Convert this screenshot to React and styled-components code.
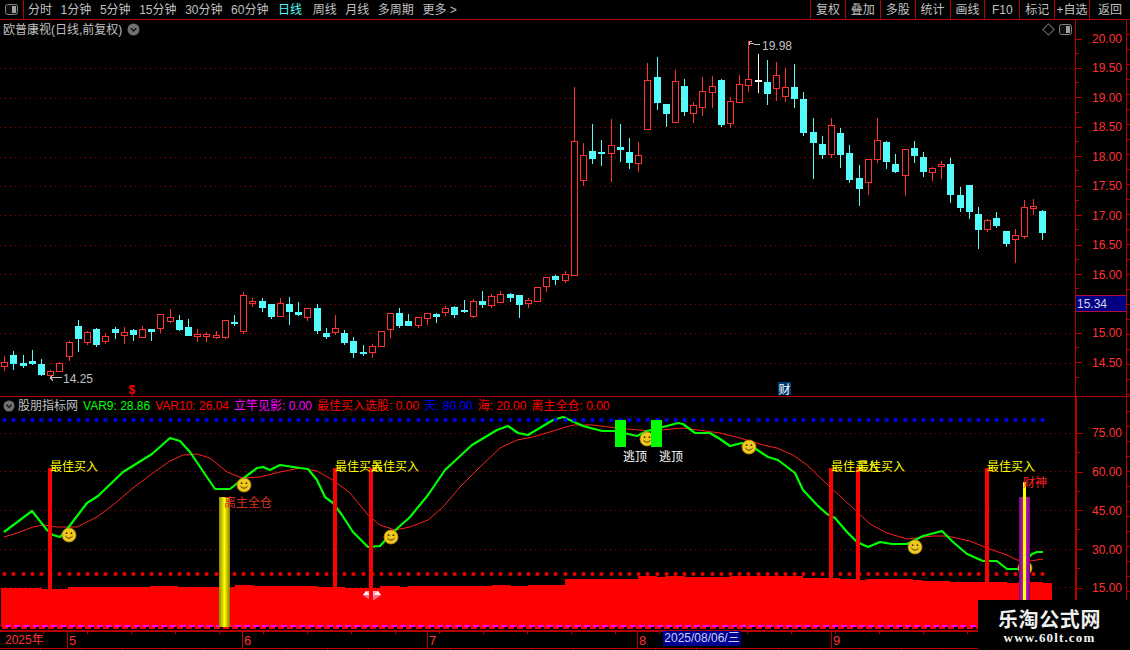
import React from 'react';
import styled, { createGlobalStyle } from 'styled-components';

const RED_LINE = '#b80000';
const AXIS_RED = '#ff3232';
const CYAN = '#54fcfc';
const CJK = '"Liberation Sans", "Noto Sans CJK SC", sans-serif';

const GlobalStyle = createGlobalStyle`
  html, body { margin: 0; padding: 0; background: #000; }
  #root { width: 1130px; height: 650px; }
`;

const Page = styled.div`
  position: relative;
  width: 1130px;
  height: 650px;
  overflow: hidden;
  background: #000;
  display: flex;
  flex-direction: column;
  font: 12px/1 ${CJK};
  color: #c0c0c0;
`;

const Toolbar = styled.header`
  flex: 0 0 20px;
  display: flex;
  align-items: stretch;
  border-bottom: 1px solid ${RED_LINE};
  box-sizing: border-box;
`;

const ToolIcon = styled.div`
  width: 23px;
  display: flex;
  align-items: center;
  justify-content: center;
  border-right: 1px solid ${RED_LINE};
`;

const PeriodList = styled.nav`
  display: flex;
  align-items: center;
  gap: 8.6px;
  padding-left: 4px;
`;

const Period = styled.span`
  color: ${(p) => (p.$active ? '#54fcfc' : '#c0c0c0')};
  margin-left: ${(p) => p.$nudge || 0}px;
  white-space: nowrap;
`;

const ActionList = styled.nav`
  margin-left: auto;
  display: flex;
`;

const Action = styled.span`
  width: ${(p) => (p.$wide ? '41px' : '34.875px')};
  box-sizing: border-box;
  border-left: 1px solid ${RED_LINE};
  display: flex;
  align-items: center;
  justify-content: center;
  white-space: nowrap;
`;

const Pane = styled.section`
  flex: 0 0 ${(p) => p.$height}px;
  display: flex;
  box-sizing: border-box;
  border-bottom: ${(p) => (p.$divided ? `1px solid ${RED_LINE}` : '0')};
`;

const ChartColumn = styled.div`
  position: relative;
  width: 1075px;
  display: flex;
  flex-direction: column;
`;

const ChartSvg = styled.svg`
  display: block;
  flex: 1 1 auto;
  shape-rendering: crispEdges;
`;

const PaneTitle = styled.div`
  position: absolute;
  left: 3px;
  top: 3px;
  display: flex;
  align-items: center;
  gap: 5px;
  height: 13px;
  white-space: nowrap;
`;

const PaneTools = styled.div`
  position: absolute;
  right: 3px;
  top: 4px;
  display: flex;
  align-items: center;
  gap: 6px;
`;

const Diamond = styled.i`
  display: block;
  width: 7px;
  height: 7px;
  border: 1px solid #707070;
  transform: rotate(45deg);
`;

const Legend = styled.div`
  flex: 0 0 18px;
  display: flex;
  align-items: center;
  gap: 5px;
  padding-left: 3px;
  white-space: nowrap;
`;

const LegendItem = styled.span`
  color: ${(p) => p.$color};
`;

const LegendName = styled.span`
  color: #c0c0c0;
  margin-left: -2px;
`;

const Axis = styled.aside`
  width: 52px;
  box-sizing: border-box;
  border-left: ${(p) => p.$border}px solid ${RED_LINE};
  border-right: 1px solid ${RED_LINE};
  padding-top: ${(p) => p.$top}px;
  display: flex;
  flex-direction: column;
`;

const AxisRow = styled.div`
  flex: 0 0 ${(p) => p.$height}px;
  display: flex;
  align-items: center;
  justify-content: flex-end;
  padding-right: 4px;
  color: ${AXIS_RED};
  background:
    linear-gradient(${RED_LINE}, ${RED_LINE}) left center / 6px 1px no-repeat,
    linear-gradient(${RED_LINE}, ${RED_LINE}) left bottom / 3px 1px no-repeat;
`;

const CurrentPrice = styled.div`
  flex: 0 0 29.45px;
  display: flex;
  align-items: center;
`;

const CurrentValue = styled.span`
  flex: 1;
  height: 17px;
  line-height: 16px;
  box-sizing: border-box;
  padding-left: 1px;
  background: #000080;
  border-top: 1px solid #b01040;
  border-bottom: 1px solid #b01040;
  color: #d0d8f0;
`;

const EdgeStrip = styled.div`
  flex: 1 1 auto;
  background: repeating-linear-gradient(
    to bottom,
    #000 0,
    #000 14px,
    ${RED_LINE} 14px,
    ${RED_LINE} 15px
  );
`;

const DateAxis = styled.div`
  flex: 0 0 19px;
  box-sizing: border-box;
  display: flex;
  border-top: 2px solid ${RED_LINE};
  border-bottom: 1px solid ${RED_LINE};
  color: ${AXIS_RED};
  align-items: stretch;
  background: repeating-linear-gradient(
      to right,
      transparent 0,
      transparent 43px,
      ${RED_LINE} 43px,
      ${RED_LINE} 44px
    )
    left top / 100% 2px no-repeat;
`;

const DateCell = styled.span`
  flex: 0 0 ${(p) => p.$width}px;
  box-sizing: border-box;
  display: flex;
  align-items: center;
  padding-left: ${(p) => (p.$first ? 5 : 1)}px;
  border-left: ${(p) => (p.$first ? '0' : `1px solid ${RED_LINE}`)};
  font-size: ${(p) => (p.$first ? 12 : 13)}px;
`;

const DateFlag = styled.span`
  position: absolute;
  left: 663px;
  top: 631px;
  width: 78px;
  height: 15px;
  background: #000090;
  color: #c8d0f8;
  line-height: 15px;
  text-align: center;
  white-space: nowrap;
`;

const TabStrip = styled.div`
  flex: 1 1 auto;
  background: repeating-linear-gradient(
    to right,
    #000 0,
    #000 40px,
    ${RED_LINE} 40px,
    ${RED_LINE} 41px
  );
`;

const Watermark = styled.div`
  position: absolute;
  left: 978px;
  top: 600px;
  width: 152px;
  height: 50px;
  background: #000;
  display: flex;
  flex-direction: column;
  align-items: center;
  padding-right: 9px;
  box-sizing: border-box;
`;

const WatermarkName = styled.strong`
  margin-top: 8px;
  font: 700 20px/22px "Noto Sans CJK SC", sans-serif;
  letter-spacing: 0.6px;
  color: #f0f0f0;
`;

const WatermarkUrl = styled.em`
  font: 700 13px/15px "Liberation Serif", serif;
  font-style: normal;
  letter-spacing: 1.15px;
  color: #f4f4f4;
`;

const ChartText = styled.text`
  font: ${(p) => p.$size || 12}px ${CJK};
  font-weight: ${(p) => (p.$bold ? 700 : 400)};
  fill: ${(p) => p.$color || '#c0c0c0'};
  shape-rendering: auto;
  white-space: pre;
`;

const CurveLine = styled.polyline`
  fill: none;
  stroke: ${(p) => p.$color};
  stroke-width: ${(p) => p.$weight}px;
  stroke-linejoin: round;
  shape-rendering: auto;
`;

const GridLine = styled.line`
  stroke: #a00000;
  stroke-width: 1px;
  stroke-dasharray: 1 4;
`;

const PanelGlyph = () => (
  <svg width="13" height="11" viewBox="0 0 13 11">
    <rect x="0.5" y="0.5" width="12" height="10" rx="2" fill="#101010" stroke="#808080" />
    <rect x="7" y="2" width="4" height="7" fill="#a0a0a0" />
  </svg>
);

const ChevronBadge = ({ size = 13 }) => (
  <svg width={size} height={size} viewBox="0 0 13 13">
    <circle cx="6.5" cy="6.5" r="6" fill="#707070" />
    <path d="M3.8 5.2 L6.5 8 L9.2 5.2" fill="none" stroke="#101010" strokeWidth="1.4" />
  </svg>
);

// high, body top, body bottom, low, kind
const CANDLES = [
  [356,362,366,370,'r'],[351,355,363,369,'c'],[355,363,365,367,'c'],[350,361,363,364,'c'],[359,364,374,375,'c'],
  [370,371,375,376,'r'],[362,363,371,371,'r'],[341,342,356,360,'r'],[320,326,338,351,'c'],[331,332,342,344,'r'],
  [328,329,344,346,'c'],[333,336,341,343,'r'],[327,329,332,338,'c'],[327,332,335,343,'r'],[329,330,334,340,'c'],
  [326,329,337,337,'r'],[329,329,331,340,'c'],[314,314,328,332,'r'],[309,317,321,322,'r'],[315,320,329,330,'c'],
  [319,327,335,335,'c'],[329,334,336,341,'r'],[332,334,336,341,'r'],[331,335,337,338,'r'],[320,320,337,338,'r'],
  [315,322,323,325,'c'],[292,295,331,333,'r'],[298,301,303,306,'r'],[298,301,307,311,'c'],[304,304,316,318,'c'],
  [298,303,316,316,'r'],[297,304,311,324,'c'],[302,312,314,315,'c'],[308,308,317,320,'r'],[304,308,330,333,'c'],
  [328,333,336,338,'c'],[315,328,332,334,'r'],[330,333,342,344,'c'],[337,341,352,357,'c'],[345,352,353,355,'c'],
  [344,346,352,357,'r'],[331,331,346,346,'r'],[313,313,329,337,'r'],[308,313,325,327,'c'],[314,321,325,325,'c'],
  [317,317,325,327,'r'],[313,313,318,324,'r'],[313,314,316,322,'c'],[306,308,312,315,'r'],[306,307,314,317,'c'],
  [300,310,311,312,'c'],[299,301,316,317,'r'],[291,301,304,307,'c'],[294,296,305,307,'r'],[291,294,302,302,'r'],
  [293,294,297,301,'c'],[295,295,304,317,'c'],[298,300,303,307,'r'],[287,287,301,301,'r'],[277,277,286,291,'r'],
  [275,276,279,284,'c'],[271,274,280,282,'r'],[87,141,275,275,'r'],[143,155,180,185,'r'],[124,151,158,163,'c'],
  [140,152,153,165,'c'],[119,145,153,181,'r'],[124,147,149,161,'c'],[138,152,162,168,'c'],[142,155,163,171,'r'],
  [63,80,129,129,'r'],[57,77,102,109,'c'],[104,104,113,126,'c'],[70,81,122,122,'r'],[79,86,111,115,'c'],
  [102,105,113,122,'r'],[77,91,107,115,'r'],[76,86,92,107,'r'],[79,80,124,126,'c'],[97,101,123,127,'r'],
  [75,84,102,102,'r'],[41,79,85,91,'r'],[54,80,81,92,'w'],[60,82,93,104,'c'],[62,75,88,100,'r'],
  [68,87,96,101,'r'],[64,87,98,107,'c'],[92,99,132,135,'c'],[118,132,142,178,'c'],[136,144,154,158,'c'],
  [118,125,154,157,'r'],[128,133,154,167,'c'],[145,153,179,182,'c'],[165,178,188,205,'c'],[159,159,182,194,'r'],
  [118,140,159,162,'r'],[141,142,161,168,'c'],[154,164,171,172,'c'],[149,149,175,195,'r'],[141,148,155,162,'c'],
  [152,157,171,176,'c'],[167,168,172,180,'r'],[161,164,166,178,'r'],[158,164,194,202,'c'],[187,195,207,211,'c'],
  [185,185,211,218,'c'],[207,214,229,248,'c'],[219,220,229,231,'r'],[212,218,225,227,'c'],[231,231,243,246,'c'],
  [229,235,239,262,'r'],[200,207,236,238,'r'],[199,206,208,214,'r'],[210,211,232,239,'c'],
];

const slotX = (i) => Math.round(4.3 + 9.186 * i);
const KIND_COLOR = { r: AXIS_RED, c: CYAN, w: '#ffffff' };

const Candle = ({ x, data }) => {
  const [high, top, bottom, low, kind] = data;
  const color = KIND_COLOR[kind];
  const height = Math.max(bottom - top, 1);
  return (
    <g>
      <rect x={x} y={high} width="1" height={low - high + 1} fill={color} />
      {kind === 'r' && bottom - top > 1 ? (
        <rect x={x - 2.5} y={top + 0.5} width="6" height={height} fill="#000" stroke={color} strokeWidth="1" />
      ) : (
        <rect x={x - 3} y={top} width="7" height={height + 1} fill={color} />
      )}
    </g>
  );
};

const PRICE_GRID = [68, 98, 127, 157, 186, 215, 245, 274, 304, 333, 363];

const PriceChart = () => (
  <ChartSvg width="1075" height="376" viewBox="0 20 1075 376">
    {PRICE_GRID.map((y) => (
      <GridLine key={y} x1="0" x2="1075" y1={y + 0.5} y2={y + 0.5} />
    ))}
    {CANDLES.map((c, i) => (
      <Candle key={i} x={slotX(i)} data={c} />
    ))}
    <path d="M50 377.5H62M50 377.5l3-2M50 377.5l3 3" stroke="#c0c0c0" fill="none" />
    <ChartText x="63" y="383">14.25</ChartText>
    <path d="M749.5 45V41.5H752M749.5 43.5H754M754 44.5H760" stroke="#c0c0c0" fill="none" />
    <ChartText x="762" y="50">19.98</ChartText>
    <ChartText x="128.5" y="393.5" $bold $color="#ff0000" $size={12}>$</ChartText>
    <rect x="778" y="382" width="13" height="13" fill="#003a70" />
    <ChartText x="778.5" y="393.5" $color="#ffffff">财</ChartText>
  </ChartSvg>
);

const GREEN = [
  [4,532],[32,511],[47,530],[53,535],[60,537],[68,528],[87,503],[98,496],[123,472],[152,454],[170,438],[180,441],[190,452],[215,489],[230,489],[245,477],[257,468],[263,467],[270,470],[280,465],
  [300,468],[308,469],[317,480],[325,497],[333,503],[342,515],[353,532],[368,547],[380,546],[390,535],[410,517],[428,495],[445,470],[472,445],[497,430],[508,426],[518,433],[528,435],[553,420],[563,417],[572,421],[583,426],[602,431],[615,431],[637,436],[647,431],[663,427],[678,423],[683,424],[695,433],[710,433],
  [720,439],[730,446],[742,443],[753,447],[768,457],[778,460],[795,473],[803,490],[817,505],[827,514],[835,518],[847,532],[857,542],[868,547],[880,542],[892,544],[907,544],[923,536],[942,531],[953,542],[967,554],[983,561],[997,561],[1007,569],[1018,569],[1032,554],[1037,552],[1043,552],
];

const THIN_RED = [
  [4,537],[17,533],[33,527],[43,525],[57,527],[77,527],[97,517],[113,505],[133,488],[153,473],[170,461],[183,455],[197,454],[210,458],[227,472],[242,478],[260,477],[280,472],
  [300,468],[317,471],[333,480],[350,493],[368,515],[380,525],[395,530],[410,527],[428,520],[443,507],[460,487],[480,467],[500,448],[517,440],[533,437],[553,431],[573,425],[593,425],[617,428],[650,431],[683,428],
  [720,433],[740,438],[763,445],[777,448],[793,455],[807,465],[830,487],[853,508],[870,524],[887,533],[907,539],[933,536],[947,536],[970,541],[987,548],[1007,555],[1017,560],[1030,561],[1043,559],
];

const STEPS = [
  [42,588],[68,589],[150,587],[178,586],[235,587],[253,585],[317,586],[345,587],[380,588],[400,586],[408,587],[492,586],[510,585],[528,586],[565,585],[638,579],[657,576],[665,577],[685,576],[702,577],[730,577],[803,576],[813,578],[840,578],[857,579],[867,580],[913,579],[923,580],[950,581],[960,582],[1007,582],[1018,583],[1043,582],[1052,583],
];

const mountainPath = () => {
  let d = 'M1 627';
  let prev = 1;
  STEPS.forEach(([end, top]) => {
    d += `L${prev} ${top}L${end} ${top}`;
    prev = end;
  });
  return `${d}L${prev} 627Z`;
};

const BUY_BARS = [
  { x: 48, label: 50 },
  { x: 333, label: 335 },
  { x: 369, label: 371, tail: 602 },
  { x: 829, label: 831 },
  { x: 856, label: 857 },
  { x: 985, label: 987 },
];

const SMILES = [[69,535],[244,485],[391,537],[647,439],[749,447],[915,547],[1025,568]];

const Smile = ({ x, y }) => (
  <g style={{ shapeRendering: 'auto' }}>
    <circle cx={x} cy={y} r="7" fill="#f2c81e" stroke="#b98a10" strokeWidth="0.8" />
    <circle cx={x - 2.4} cy={y - 1.8} r="0.9" fill="#3a2a00" />
    <circle cx={x + 2.4} cy={y - 1.8} r="0.9" fill="#3a2a00" />
    <path d={`M${x - 3.6} ${y + 1.2}Q${x} ${y + 5.2} ${x + 3.6} ${y + 1.2}`} fill="none" stroke="#3a2a00" strokeWidth="0.9" />
  </g>
);

const Gem = () => (
  <g style={{ shapeRendering: 'auto' }}>
    <polygon points="366,591 378,591 381,595 372,601 363,595" fill="#f8a8b8" />
    <polygon points="366,591 370,595 363,595" fill="#fff0f2" />
    <polygon points="378,591 381,595 374,595" fill="#fff0f2" />
    <polygon points="363,595 370,595 372,601" fill="#f0708a" />
    <polygon points="381,595 374,595 372,601" fill="#f0708a" />
  </g>
);

const INDICATOR_GRID = [433, 471, 510, 549, 587];
const DOT_SLOTS = Array.from({ length: 114 }, (_, i) => slotX(i) + 0.5);

const IndicatorChart = () => (
  <ChartSvg width="1075" height="215" viewBox="0 415 1075 215">
    <defs>
      <linearGradient id="goldBar" x1="0" x2="1" y1="0" y2="0">
        <stop offset="0" stopColor="#8a8a00" />
        <stop offset="0.5" stopColor="#ffff00" />
        <stop offset="1" stopColor="#8a7a00" />
      </linearGradient>
      <linearGradient id="violetBar" x1="0" x2="1" y1="0" y2="0">
        <stop offset="0" stopColor="#800080" />
        <stop offset="0.5" stopColor="#c030c0" />
        <stop offset="1" stopColor="#800080" />
      </linearGradient>
    </defs>
    {INDICATOR_GRID.map((y) => (
      <GridLine key={y} x1="0" x2="1075" y1={y + 0.5} y2={y + 0.5} />
    ))}
    <path d={mountainPath()} fill="#ff0000" />
    {DOT_SLOTS.map((x) => (
      <rect key={x} x={x - 3} y="626" width="6" height="3" fill="#ff0000" />
    ))}
    <line x1="5" x2="1052" y1="626" y2="626" stroke="#ff00ff" strokeWidth="2" strokeDasharray="6 3.186" />
    <Gem />
    <CurveLine $color="#ff2020" $weight={1} points={THIN_RED.join(' ')} />
    <CurveLine $color="#00ff00" $weight={2.2} points={GREEN.join(' ')} />
    {SMILES.map(([x, y]) => (
      <Smile key={x} x={x} y={y} />
    ))}
    <g style={{ shapeRendering: 'auto' }}>
      {DOT_SLOTS.map((x) => (
        <circle key={x} cx={x} cy="420" r="2.1" fill="#0000ff" />
      ))}
      {DOT_SLOTS.map((x) => (
        <circle key={x} cx={x} cy="574" r="2.1" fill="#e80000" />
      ))}
    </g>
    {BUY_BARS.map((b) => (
      <rect key={b.x} x={b.x} y="468" width="4" height={(b.tail || 590) - 468} fill="#ff0000" />
    ))}
    <rect x="219" y="497" width="11" height="130" fill="url(#goldBar)" />
    <rect x="1019" y="497" width="11" height="110" fill="url(#violetBar)" />
    <rect x="1023" y="482" width="3" height="125" fill="#ffff00" />
    <rect x="615" y="420" width="11" height="27" fill="#00ff00" />
    <rect x="651" y="420" width="11" height="27" fill="#00ff00" />
    {BUY_BARS.map((b) => (
      <ChartText key={b.x} x={b.label} y="471" $color="#ffff00">最佳买入</ChartText>
    ))}
    <ChartText x="224" y="507" $color="#d83020">离主全仓</ChartText>
    <ChartText x="623" y="461" $color="#ffffff">逃顶</ChartText>
    <ChartText x="659" y="461" $color="#ffffff">逃顶</ChartText>
    <ChartText x="1023" y="487" $color="#ff2020">财神</ChartText>
  </ChartSvg>
);

const PERIODS = [
  ['分时'], ['1分钟'], ['5分钟'], ['15分钟'], ['30分钟'], ['60分钟'],
  ['日线', 1], ['周线', 2], ['月线'], ['多周期'], ['更多 >'],
];
const ACTIONS = ['复权', '叠加', '多股', '统计', '画线', 'F10', '标记', '+自选'];
const PRICE_TOP = ['20.00', '19.50', '19.00', '18.50', '18.00', '17.50', '17.00', '16.50', '16.00'];
const LEGEND = [
  ['VAR9: 28.86', '#00ff00'],
  ['VAR10: 26.04', '#ff0000'],
  ['立竿见影: 0.00', '#ff00ff'],
  ['最佳买入选股: 0.00', '#ff0000'],
  ['天: 80.00', '#0000ff'],
  ['海: 20.00', '#ff0000'],
  ['离主全仓: 0.00', '#ff0000'],
];
const DATE_CELLS = [
  ['2025年', 67],
  ['5', 175],
  ['6', 185],
  ['7', 210],
  ['8', 194],
  ['9', 299],
];

export default function App() {
  return (
    <Page>
      <GlobalStyle />
      <Toolbar>
        <ToolIcon><PanelGlyph /></ToolIcon>
        <PeriodList>
          {PERIODS.map(([p, nudge]) => (
            <Period key={p} $active={p === '日线'} $nudge={nudge}>{p}</Period>
          ))}
        </PeriodList>
        <ActionList>
          {ACTIONS.map((a) => (
            <Action key={a}>{a}</Action>
          ))}
          <Action $wide>返回</Action>
        </ActionList>
      </Toolbar>

      <Pane $height={377} $divided>
        <ChartColumn>
          <PriceChart />
          <PaneTitle>
            欧普康视(日线,前复权)
            <ChevronBadge />
          </PaneTitle>
          <PaneTools>
            <Diamond />
            <PanelGlyph />
          </PaneTools>
        </ChartColumn>
        <Axis $border={1} $top={4.3}>
          {PRICE_TOP.map((v) => (
            <AxisRow key={v} $height={29.45}>{v}</AxisRow>
          ))}
          <CurrentPrice><CurrentValue>15.34</CurrentValue></CurrentPrice>
          <AxisRow $height={29.45}>15.00</AxisRow>
          <AxisRow $height={29.45}>14.50</AxisRow>
        </Axis>
        <EdgeStrip />
      </Pane>

      <Pane $height={232}>
        <ChartColumn>
          <Legend>
            <ChevronBadge size={12} />
            <LegendName>股朋指标网</LegendName>
            {LEGEND.map(([text, color]) => (
              <LegendItem key={text} $color={color}>{text}</LegendItem>
            ))}
          </Legend>
          <IndicatorChart />
        </ChartColumn>
        <Axis $border={2} $top={17}>
          {['75.00', '60.00', '45.00', '30.00', '15.00'].map((v) => (
            <AxisRow key={v} $height={38.75}>{v}</AxisRow>
          ))}
        </Axis>
        <EdgeStrip />
      </Pane>

      <DateAxis>
        {DATE_CELLS.map(([text, width], i) => (
          <DateCell key={text} $width={width} $first={i === 0}>{text}</DateCell>
        ))}
      </DateAxis>
      <TabStrip />
      <DateFlag>2025/08/06/三</DateFlag>
      <Watermark>
        <WatermarkName>乐淘公式网</WatermarkName>
        <WatermarkUrl>www.60lt.com</WatermarkUrl>
      </Watermark>
    </Page>
  );
}
